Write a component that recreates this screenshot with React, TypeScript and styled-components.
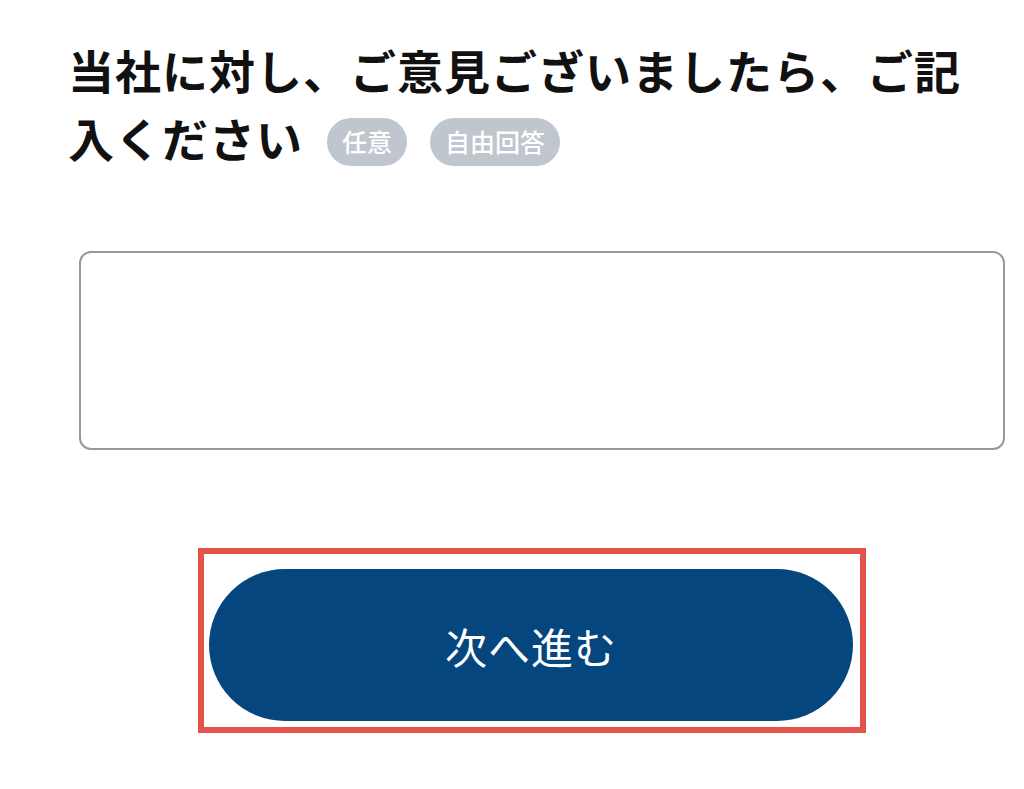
import React from "react";
import styled, { createGlobalStyle } from "styled-components";

const GlobalStyle = createGlobalStyle`
  html, body {
    margin: 0;
    padding: 0;
    background: #ffffff;
  }
  body {
    font-family: "Noto Sans CJK JP", "Noto Sans", sans-serif;
    color: #111111;
  }
`;

const Page = styled.div`
  width: 1024px;
  height: 789px;
  box-sizing: border-box;
  padding: 35px 0 0 68px;
  overflow: hidden;
`;

const Question = styled.div`
  margin: 0;
  width: 920px;
  font-size: 46px;
  line-height: 68px;
`;

const QuestionText = styled.h2`
  display: inline;
  margin: 0;
  font-size: 46px;
  font-weight: 700;
  letter-spacing: 1px;
`;

const Tag = styled.span<{ $gap: number }>`
  display: inline-flex;
  align-items: center;
  justify-content: center;
  height: 48px;
  padding: 0 15px;
  margin-left: ${(p) => p.$gap}px;
  border-radius: 24px;
  background: #bfc6cd;
  color: #ffffff;
  font-size: 25px;
  font-weight: 500;
  line-height: 1;
  vertical-align: middle;
  position: relative;
  top: -3px;
`;

const AnswerBox = styled.textarea`
  display: block;
  box-sizing: border-box;
  margin: 80px 0 0 11px;
  width: 926px;
  height: 199px;
  border: 2px solid #999999;
  border-radius: 12px;
  resize: none;
  outline: none;
  font-family: inherit;
  font-size: 24px;
  padding: 12px 16px;
`;

const Highlight = styled.div`
  box-sizing: border-box;
  margin: 98px 0 0 130px;
  width: 668px;
  height: 185px;
  border: 6px solid #e5524a;
  padding: 15px 7px 5px 5px;
`;

const NextButton = styled.button`
  display: flex;
  align-items: center;
  justify-content: center;
  width: 100%;
  height: 152px;
  border: none;
  border-radius: 76px;
  background: #05467e;
  color: #ffffff;
  font-family: inherit;
  font-size: 42px;
  font-weight: 400;
  letter-spacing: 1px;
  cursor: pointer;
`;

export default function App() {
  return (
    <>
      <GlobalStyle />
      <Page>
        <Question>
          <QuestionText>当社に対し、ご意見ございましたら、ご記入ください</QuestionText>
          <Tag $gap={24}>任意</Tag>
          <Tag $gap={23}>自由回答</Tag>
        </Question>
        <AnswerBox />
        <Highlight>
          <NextButton>次へ進む</NextButton>
        </Highlight>
      </Page>
    </>
  );
}
